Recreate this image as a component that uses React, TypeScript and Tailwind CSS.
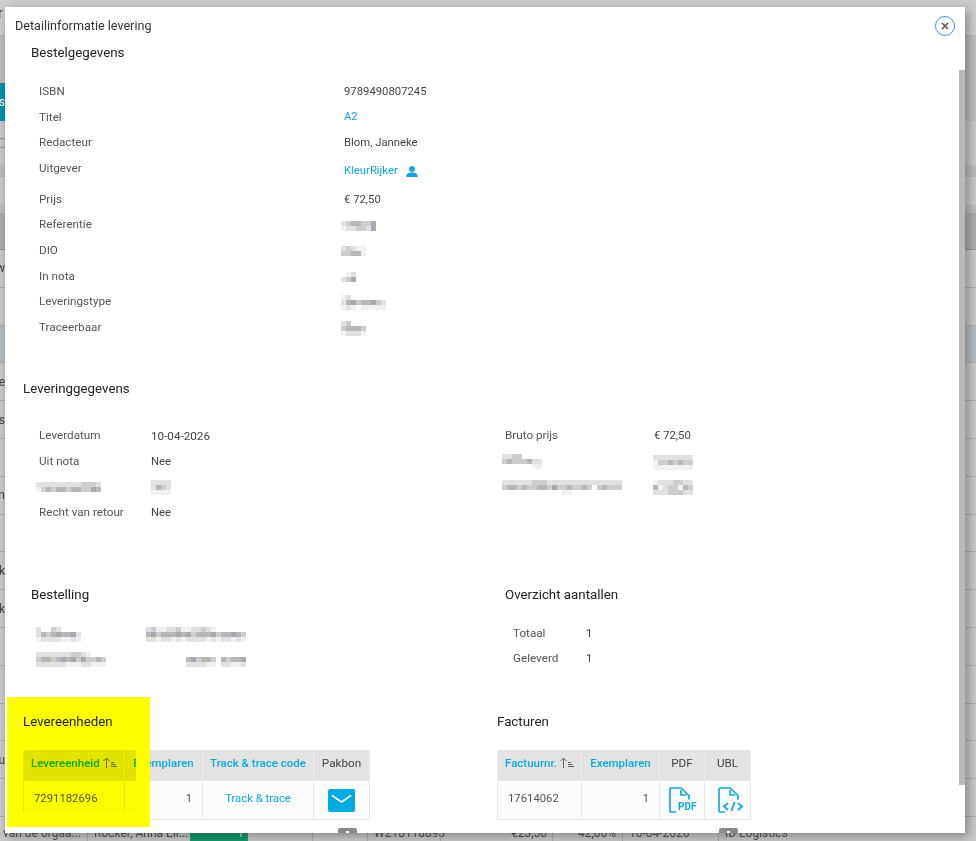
import type { ReactNode } from 'react';

const shades: Record<string, string> = {
  '0': 'bg-white',
  '1': 'bg-[#f1f1f1]',
  '2': 'bg-[#e3e1e0]',
  '3': 'bg-[#cfcccc]',
  '4': 'bg-[#b8b6b7]',
  '5': 'bg-[#a6aab0]',
};

// pixelated (censored) bits of the screenshot
const Blur = ({ rows, className = '-ml-[3px]' }: { rows: string[]; className?: string }) => (
  <div className={`flex flex-col ${className}`}>
    {rows.map((row, r) => (
      <div key={r} className="flex">
        {row.split('').map((c, i) => (
          <span key={i} className={`h-[5px] w-[5px] ${shades[c]}`} />
        ))}
      </div>
    ))}
  </div>
);

const Row = ({ label, children, labelWidth }: { label: ReactNode; children: ReactNode; labelWidth: string }) => (
  <div className="flex h-[25.6px] items-center">
    <div className={`${labelWidth} text-[11.7px] text-[#555]`}>{label}</div>
    <div className="pt-px text-[11.3px] text-[#444]">{children}</div>
  </div>
);

const Title = ({ children, className = '' }: { children: ReactNode; className?: string }) => (
  <h2 className={`h-5 text-[13.3px] leading-[22px] font-normal text-[#222] ${className}`}>{children}</h2>
);

const SortIcon = () => (
  <svg viewBox="0 0 15 11" className="ml-[2px] inline-block h-[11px] w-[15px] align-[-1px]" fill="none" stroke="#666" strokeWidth="1">
    <path d="M4.5 11V1M1.5 4l3-3 3 3" />
    <path d="M9 5.5h3M9 7.5h4.5M9 9.5h6" />
  </svg>
);

const PersonIcon = () => (
  <svg viewBox="0 0 12 11" className="ml-[8px] h-[11px] w-[12px]" fill="#0fa8dc">
    <ellipse cx="6" cy="3" rx="2.9" ry="3" />
    <path d="M0.5 11V9.4C0.5 7.8 2.5 7 4 6.6h4c1.5.4 3.5 1.2 3.5 2.8V11z" />
  </svg>
);

const MailIcon = () => (
  <svg viewBox="0 0 27 23" className="mx-auto h-[23px] w-[27px]">
    <rect width="27" height="23" rx="2" fill="#00a9e0" />
    <path d="M4 6.5l9.5 6.5L23 6.5" fill="none" stroke="#fff" strokeWidth="1.6" />
  </svg>
);

const FileIcon = ({ children, className }: { children: ReactNode; className: string }) => (
  <svg viewBox="0 0 28 26" className={`h-[26px] w-[28px] ${className}`} fill="none" stroke="#12aade" strokeWidth="1.7">
    <path d="M7 25H2.6A1.6 1.6 0 0 1 1 23.4V2.6A1.6 1.6 0 0 1 2.6 1H12l8 7.5v4" />
    <path d="M12 3v5h5.5" />
    {children}
  </svg>
);

const headCell = 'h-[31px] border-x border-[#ececec] bg-[#e3e3e3] pb-[2px] text-[11.5px] font-medium';
const plainHeadCell = 'h-[31px] border-x border-[#ececec] bg-[#e3e3e3] pb-[2px] text-[11.7px] font-normal text-[#444]';
const bodyCell = 'h-[39px] border border-[#e6e6e6] bg-[#fcfcfc] text-[11.3px]';

const bgRows = [
  { side: 'w', cls: 'bg-[#c9c9c9]' },
  { side: '', cls: 'bg-[#c9c9c9]' },
  { side: '', cls: 'bg-[#b3bdc1]' },
  { side: 'e', cls: 'bg-[#c9c9c9]' },
  { side: 's', cls: 'bg-[#c9c9c9]' },
  { side: '', cls: 'bg-[#c9c9c9]' },
  { side: 'n', cls: 'bg-[#c9c9c9]' },
  { side: '', cls: 'bg-[#c9c9c9]' },
  { side: 'k', cls: 'bg-[#c9c9c9]' },
  { side: 'k', cls: 'bg-[#c9c9c9]' },
  { side: '', cls: 'bg-[#c9c9c9]' },
  { side: '', cls: 'bg-[#c9c9c9]' },
  { side: '', cls: 'bg-[#c9c9c9]' },
  { side: 'u', cls: 'bg-[#c9c9c9]' },
  { side: '', cls: 'bg-[#c9c9c9]' },
];

const Background = () => (
  <div className="text-[12px] text-[#3f3f3f]">
    <div className="flex h-[36px] items-center border-b border-[#b4b4b4] bg-[#cecece] pb-[8px]">
      <span className="-ml-[2px] text-[14px]">r</span>
    </div>
    <div className="h-[47px] bg-[#bdbdbd]" />
    <div className="flex h-[38px] bg-[#bdbdbd]">
      <div className="flex w-[5px] items-center justify-end bg-[#0090b5] text-white">s</div>
    </div>
    <div className="flex h-[44px] items-center bg-[#c8c8c8]">
      <span className="-ml-[3px] h-[10px] w-[10px] rounded-full border border-[#8b8b8b]" />
    </div>
    <div className="h-[12px] bg-[#bbbbbb]" />
    <div className="h-[28px] bg-[#c9c9c9]" />
    <div className="h-[8px] bg-[#bdbdbd]" />
    <div className="h-[37px] border-b border-[#8f8f8f] bg-[#adadad]" />
    {bgRows.map((row, i) => (
      <div key={i} className={`flex h-[37.8px] items-center border-b border-[#ababab] ${row.cls}`}>
        <div className="flex w-[5px] justify-end overflow-hidden">{row.side}</div>
      </div>
    ))}
    <div className="flex h-[38px] bg-[#c9c9c9] leading-[32px] whitespace-nowrap text-[#555]">
      <div className="w-[87px] pl-[3px]">van de orgaa...</div>
      <div className="w-[103px] border-l border-[#ababab] pl-[6px]">Rocker, Anna Eli...</div>
      <div className="h-full w-[58px] bg-[#179c72] pr-[4px] text-right text-[#d9e7e1]">1</div>
      <div className="h-full w-[64px]" />
      <div className="h-full w-[55px] border-l border-[#ababab]" />
      <div className="h-full w-[73px] border-l border-[#ababab] pl-[6px]">W218118893</div>
      <div className="h-full w-[112px] border-l border-[#ababab] pl-[70px]">€23,50</div>
      <div className="h-full w-[70px] border-l border-[#ababab] pl-[25px]">42,00%</div>
      <div className="h-full w-[96px] border-l border-[#ababab] pl-[6px]">10-04-2026</div>
      <div className="h-full flex-1 border-l border-[#ababab] pl-[6px]">ID Logistics</div>
    </div>
  </div>
);

export default function App() {
  return (
    <div className="relative h-[841px] w-[976px] overflow-hidden bg-[#c9c9c9] font-[Roboto,sans-serif] text-[12px]">
      <Background />

      <div className="absolute top-[7px] left-[5px] h-[826px] w-[960px] overflow-hidden bg-white shadow-[3px_3px_10px_rgba(0,0,0,0.35)]">
        <header className="flex h-[35px] items-start justify-between pt-[8px] pr-[10px] pl-[10px]">
          <h1 className="text-[12.6px] leading-[22px] font-normal text-[#333]">Detailinformatie levering</h1>
          <button className="mt-px flex h-[20px] w-[20px] items-center justify-center rounded-full border-[1.5px] border-[#3b96e0]">
            <svg viewBox="0 0 8 8" className="h-[8px] w-[8px]" stroke="#555" strokeWidth="1.6">
              <path d="M1 1l6 6M7 1L1 7" />
            </svg>
          </button>
        </header>

        <section className="pl-[26px]">
          <Title>Bestelgegevens</Title>
          <div className="mt-[17px] pl-[8px]">
            <Row labelWidth="w-[305px]" label="ISBN">9789490807245</Row>
            <Row labelWidth="w-[305px]" label="Titel">
              <span className="text-[#0fa8dc]">A2</span>
            </Row>
            <Row labelWidth="w-[305px]" label="Redacteur">Blom, Janneke</Row>
            <div className="flex h-[31px] items-start">
              <div className="w-[305px] text-[11.7px] leading-[25.6px] text-[#555]">Uitgever</div>
              <div className="flex h-[31px] items-center text-[11.3px] text-[#0fa8dc]">
                KleurRijker
                <PersonIcon />
              </div>
            </div>
            <Row labelWidth="w-[305px]" label="Prijs">€ 72,50</Row>
            <Row labelWidth="w-[305px]" label="Referentie">
              <Blur rows={['2344335', '1223325']} />
            </Row>
            <Row labelWidth="w-[305px]" label="DIO">
              <Blur rows={['23211', '33441']} />
            </Row>
            <Row labelWidth="w-[305px]" label="In nota">
              <Blur rows={['012', '235']} />
            </Row>
            <Row labelWidth="w-[305px]" label="Leveringstype">
              <Blur rows={['120000000', '245344532', '121011111']} />
            </Row>
            <Row labelWidth="w-[305px]" label="Traceerbaar">
              <Blur rows={['23000', '34443', '12221']} />
            </Row>
          </div>
        </section>

        <section className="mt-[38px] pl-[18px]">
          <Title>Leveringgegevens</Title>
          <div className="mt-[25px] flex pl-[16px]">
            <div className="w-[466px]">
              <Row labelWidth="w-[112px]" label="Leverdatum">
                <span className="text-[11.7px]">10-04-2026</span>
              </Row>
              <Row labelWidth="w-[112px]" label="Uit nota">Nee</Row>
              <Row labelWidth="w-[112px]" label={<Blur rows={['2222222223332', '1343443443354']} />}>
                <Blur className="ml-0" rows={['2222', '2432', '1111']} />
              </Row>
              <Row labelWidth="w-[112px]" label="Recht van retour">Nee</Row>
            </div>
            <div>
              <Row labelWidth="w-[149px]" label="Bruto prijs">€ 72,50</Row>
              <Row
                labelWidth="w-[149px]"
                label={<Blur rows={['22330000', '34333422', '00000011']} />}
              >
                <Blur className="-ml-[1px]" rows={['22222222', '13343433', '11111111']} />
              </Row>
              <Row
                labelWidth="w-[149px]"
                label={
                  <Blur
                    rows={[
                      '2222223332222222222222220',
                      '3443433443533433430343330',
                      '0000000000001100000000000',
                    ]}
                  />
                }
              >
                <Blur className="-ml-[1px]" rows={['12223322', '41233143', '22233322']} />
              </Row>
            </div>
          </div>
        </section>

        <section className="mt-[58px] flex">
          <div className="w-[500px] pl-[26px]">
            <Title>Bestelling</Title>
            <div className="mt-[18px] pl-[8px]">
              <div className="flex h-[25px] items-center">
                <div className="w-[110px]">
                  <Blur rows={['200320000', '243454452', '122221121']} />
                </div>
                <Blur rows={['23112231122321000000', '45344454534445344543', '22122121222212122121']} />
              </div>
              <div className="flex h-[25px] items-center">
                <div className="w-[150px]">
                  <Blur rows={['22222223321000', '34434545353343', '22222211122111']} />
                </div>
                <Blur rows={['000000000000', '453443043445', '222211022112']} />
              </div>
            </div>
          </div>
          <div>
            <Title>Overzicht aantallen</Title>
            <div className="mt-[18px] pl-[8px]">
              <div className="flex h-[25px] items-center">
                <div className="w-[73px] text-[11.7px] text-[#555]">Totaal</div>
                <div className="text-[11.3px] text-[#444]">1</div>
              </div>
              <div className="flex h-[25px] items-center">
                <div className="w-[73px] text-[11.7px] text-[#555]">Geleverd</div>
                <div className="pt-px text-[11.3px] text-[#444]">1</div>
              </div>
            </div>
          </div>
        </section>

        <section className="mt-[39px] flex pl-[18px]">
          <div className="w-[474px]">
            <Title className="relative z-10">Levereenheden</Title>
            <table className="mt-[19px] w-[346px] table-fixed border-collapse">
              <thead>
                <tr className="text-[#0fa8dc]">
                  <th className={`${headCell} w-[101px] pl-[7px] text-left whitespace-nowrap`}>
                    Levereenheid
                    <SortIcon />
                  </th>
                  <th className={`${headCell} w-[78px]`}>Exemplaren</th>
                  <th className={`${headCell} w-[111px]`}>Track &amp; trace code</th>
                  <th className={`${plainHeadCell} w-[56px]`}>Pakbon</th>
                </tr>
              </thead>
              <tbody>
                <tr>
                  <td className={`${bodyCell} pb-[2px] pl-[10px] text-[#555]`}>7291182696</td>
                  <td className={`${bodyCell} pr-[10px] pb-[2px] text-right text-[#555]`}>1</td>
                  <td className={`${bodyCell} pb-[2px] text-center text-[#0fa8dc]`}>Track &amp; trace</td>
                  <td className={bodyCell}>
                    <MailIcon />
                  </td>
                </tr>
              </tbody>
            </table>
            <div className="mt-[8px] ml-[315px] flex h-[12px] w-[19px] justify-center rounded-t-[2px] bg-[#8a8a8a] pt-[3px]">
              <span className="h-[4px] w-[3px] bg-white" />
            </div>
          </div>
          <div>
            <Title>Facturen</Title>
            <table className="mt-[19px] w-[253px] table-fixed border-collapse">
              <thead>
                <tr className="text-[#0fa8dc]">
                  <th className={`${headCell} w-[84px] pl-[7px] text-left whitespace-nowrap`}>
                    Factuurnr.
                    <SortIcon />
                  </th>
                  <th className={`${headCell} w-[78px]`}>Exemplaren</th>
                  <th className={`${plainHeadCell} w-[45px]`}>PDF</th>
                  <th className={`${plainHeadCell} w-[46px]`}>UBL</th>
                </tr>
              </thead>
              <tbody>
                <tr>
                  <td className={`${bodyCell} pb-[2px] pl-[10px] text-[#555]`}>17614062</td>
                  <td className={`${bodyCell} pr-[10px] pb-[2px] text-right text-[#555]`}>1</td>
                  <td className={bodyCell}>
                    <FileIcon className="ml-[9px]">
                      <text x="9" y="23" fontSize="10" fontWeight="700" fontFamily="Roboto, sans-serif" fill="#12aade" stroke="none">
                        PDF
                      </text>
                    </FileIcon>
                  </td>
                  <td className={bodyCell}>
                    <FileIcon className="ml-[13px]">
                      <path d="M10 16l-4 3.5 4 3.5M20 16l4 3.5-4 3.5M16.5 15l-3 9" strokeWidth="1.8" />
                    </FileIcon>
                  </td>
                </tr>
              </tbody>
            </table>
            <div className="mt-[8px] ml-[222px] flex h-[12px] w-[19px] justify-center rounded-t-[2px] bg-[#8a8a8a] pt-[3px]">
              <span className="h-[4px] w-[3px] bg-white" />
            </div>
          </div>
        </section>

        {/* yellow marker from the screenshot: solid frame, table shows through the middle */}
        <div className="absolute top-[690px] left-[2px] h-[130px] w-[143px] border-t-[53px] border-r-[14px] border-b-[14px] border-l-[16px] border-[#ffff00]">
          <div className="h-full w-full bg-[#ffff00] mix-blend-multiply" />
        </div>

        {/* modal scrollbar */}
        <div className="absolute top-[63px] right-0 h-[715px] w-[6px] bg-[#b9b9b9]" />
      </div>
    </div>
  );
}
